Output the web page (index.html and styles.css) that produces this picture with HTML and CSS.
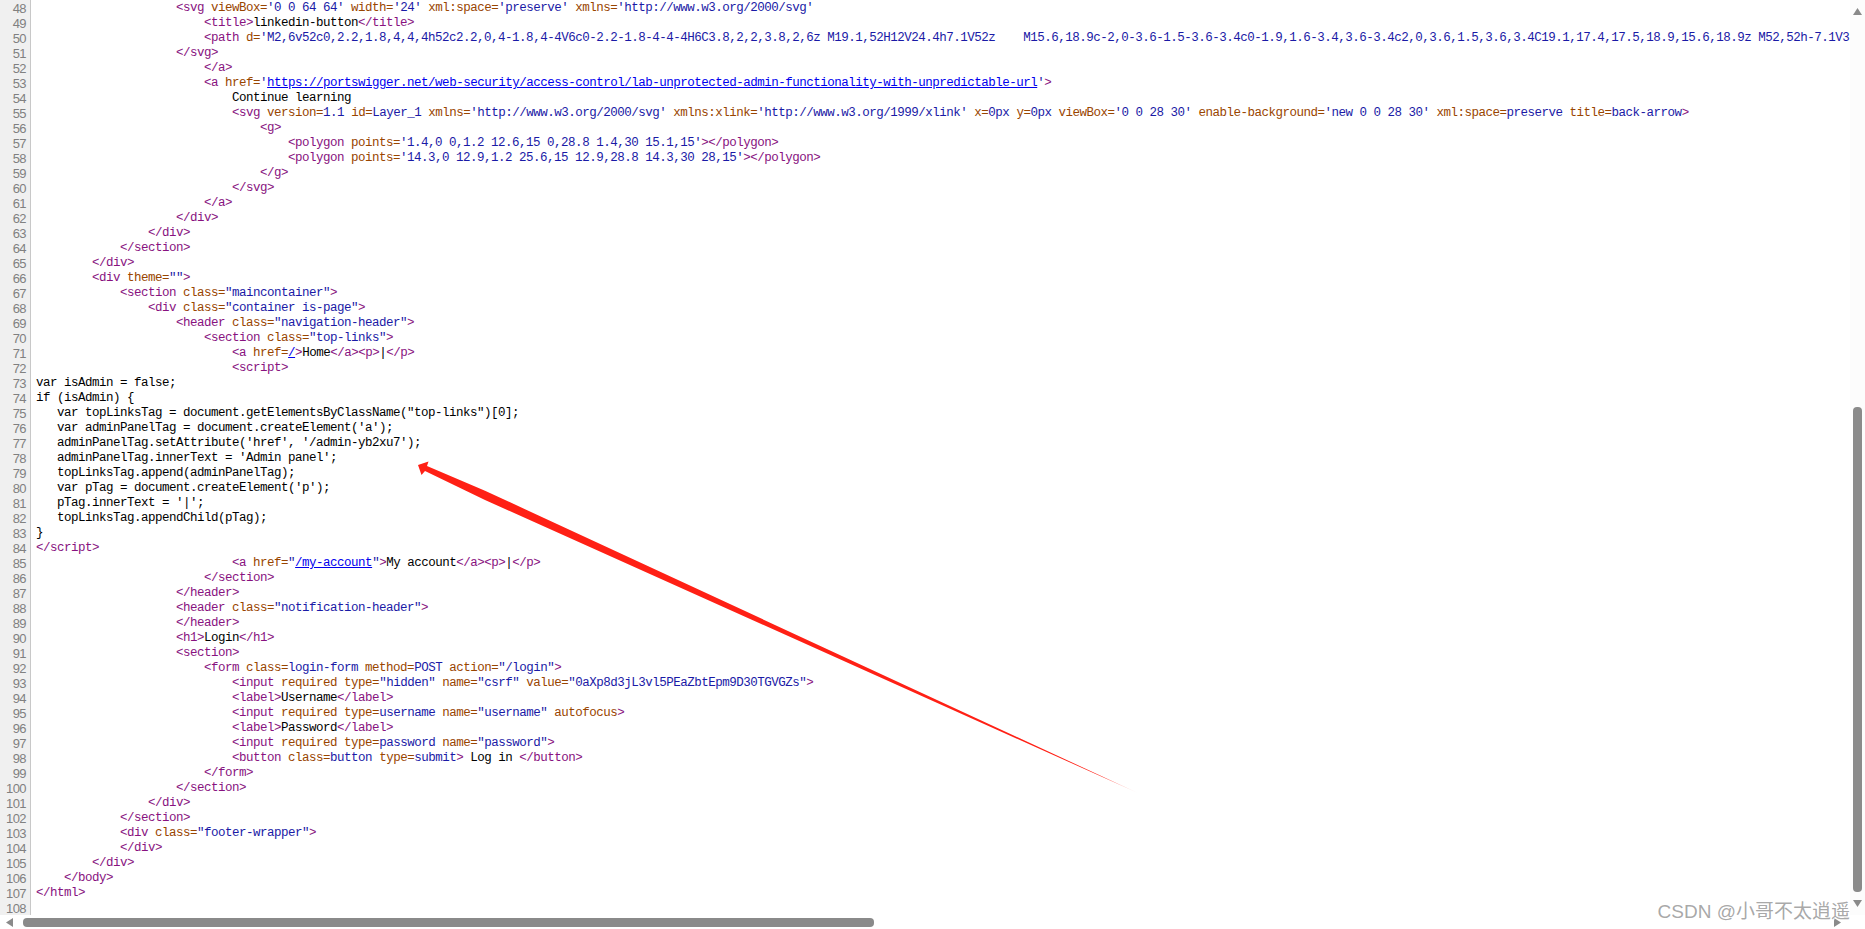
FILE: index.html
```html
<!DOCTYPE html>
<html lang="en">
<head>
<meta charset="utf-8">
<title>view-source</title>
<link rel="stylesheet" href="styles.css">
</head>
<body>
<div class="viewer">
<div class="main">
<div class="source">
<div class="row"><span class="num">48</span><span class="code">                    <i>&lt;svg</i> <b>viewBox=</b><u>'0 0 64 64'</u> <b>width=</b><u>'24'</u> <b>xml:space=</b><u>'preserve'</u> <b>xmlns=</b><u>'http://www.w3.org/2000/svg'</u></span></div>
<div class="row"><span class="num">49</span><span class="code">                        <i>&lt;title&gt;</i>linkedin-button<i>&lt;/title&gt;</i></span></div>
<div class="row"><span class="num">50</span><span class="code">                        <i>&lt;path</i> <b>d=</b><u>'M2,6v52c0,2.2,1.8,4,4,4h52c2.2,0,4-1.8,4-4V6c0-2.2-1.8-4-4-4H6C3.8,2,2,3.8,2,6z M19.1,52H12V24.4h7.1V52z    M15.6,18.9c-2,0-3.6-1.5-3.6-3.4c0-1.9,1.6-3.4,3.6-3.4c2,0,3.6,1.5,3.6,3.4C19.1,17.4,17.5,18.9,15.6,18.9z M52,52h-7.1V3</u></span></div>
<div class="row"><span class="num">51</span><span class="code">                    <i>&lt;/svg&gt;</i></span></div>
<div class="row"><span class="num">52</span><span class="code">                        <i>&lt;/a&gt;</i></span></div>
<div class="row"><span class="num">53</span><span class="code">                        <i>&lt;a</i> <b>href=</b><u>'<a href="#">https://portswigger.net/web-security/access-control/lab-unprotected-admin-functionality-with-unpredictable-url</a>'</u><i>&gt;</i></span></div>
<div class="row"><span class="num">54</span><span class="code">                            Continue learning</span></div>
<div class="row"><span class="num">55</span><span class="code">                            <i>&lt;svg</i> <b>version=</b><u>1.1</u> <b>id=</b><u>Layer_1</u> <b>xmlns=</b><u>'http://www.w3.org/2000/svg'</u> <b>xmlns:xlink=</b><u>'http://www.w3.org/1999/xlink'</u> <b>x=</b><u>0px</u> <b>y=</b><u>0px</u> <b>viewBox=</b><u>'0 0 28 30'</u> <b>enable-background=</b><u>'new 0 0 28 30'</u> <b>xml:space=</b><u>preserve</u> <b>title=</b><u>back-arrow</u><i>&gt;</i></span></div>
<div class="row"><span class="num">56</span><span class="code">                                <i>&lt;g&gt;</i></span></div>
<div class="row"><span class="num">57</span><span class="code">                                    <i>&lt;polygon</i> <b>points=</b><u>'1.4,0 0,1.2 12.6,15 0,28.8 1.4,30 15.1,15'</u><i>&gt;&lt;/polygon&gt;</i></span></div>
<div class="row"><span class="num">58</span><span class="code">                                    <i>&lt;polygon</i> <b>points=</b><u>'14.3,0 12.9,1.2 25.6,15 12.9,28.8 14.3,30 28,15'</u><i>&gt;&lt;/polygon&gt;</i></span></div>
<div class="row"><span class="num">59</span><span class="code">                                <i>&lt;/g&gt;</i></span></div>
<div class="row"><span class="num">60</span><span class="code">                            <i>&lt;/svg&gt;</i></span></div>
<div class="row"><span class="num">61</span><span class="code">                        <i>&lt;/a&gt;</i></span></div>
<div class="row"><span class="num">62</span><span class="code">                    <i>&lt;/div&gt;</i></span></div>
<div class="row"><span class="num">63</span><span class="code">                <i>&lt;/div&gt;</i></span></div>
<div class="row"><span class="num">64</span><span class="code">            <i>&lt;/section&gt;</i></span></div>
<div class="row"><span class="num">65</span><span class="code">        <i>&lt;/div&gt;</i></span></div>
<div class="row"><span class="num">66</span><span class="code">        <i>&lt;div</i> <b>theme=</b><u>""</u><i>&gt;</i></span></div>
<div class="row"><span class="num">67</span><span class="code">            <i>&lt;section</i> <b>class=</b><u>"maincontainer"</u><i>&gt;</i></span></div>
<div class="row"><span class="num">68</span><span class="code">                <i>&lt;div</i> <b>class=</b><u>"container is-page"</u><i>&gt;</i></span></div>
<div class="row"><span class="num">69</span><span class="code">                    <i>&lt;header</i> <b>class=</b><u>"navigation-header"</u><i>&gt;</i></span></div>
<div class="row"><span class="num">70</span><span class="code">                        <i>&lt;section</i> <b>class=</b><u>"top-links"</u><i>&gt;</i></span></div>
<div class="row"><span class="num">71</span><span class="code">                            <i>&lt;a</i> <b>href=</b><u><a href="#">/</a></u><i>&gt;</i>Home<i>&lt;/a&gt;&lt;p&gt;</i>|<i>&lt;/p&gt;</i></span></div>
<div class="row"><span class="num">72</span><span class="code">                            <i>&lt;script&gt;</i></span></div>
<div class="row"><span class="num">73</span><span class="code">var isAdmin = false;</span></div>
<div class="row"><span class="num">74</span><span class="code">if (isAdmin) {</span></div>
<div class="row"><span class="num">75</span><span class="code">   var topLinksTag = document.getElementsByClassName("top-links")[0];</span></div>
<div class="row"><span class="num">76</span><span class="code">   var adminPanelTag = document.createElement('a');</span></div>
<div class="row"><span class="num">77</span><span class="code">   adminPanelTag.setAttribute('href', '/admin-yb2xu7');</span></div>
<div class="row"><span class="num">78</span><span class="code">   adminPanelTag.innerText = 'Admin panel';</span></div>
<div class="row"><span class="num">79</span><span class="code">   topLinksTag.append(adminPanelTag);</span></div>
<div class="row"><span class="num">80</span><span class="code">   var pTag = document.createElement('p');</span></div>
<div class="row"><span class="num">81</span><span class="code">   pTag.innerText = '|';</span></div>
<div class="row"><span class="num">82</span><span class="code">   topLinksTag.appendChild(pTag);</span></div>
<div class="row"><span class="num">83</span><span class="code">}</span></div>
<div class="row"><span class="num">84</span><span class="code"><i>&lt;/script&gt;</i></span></div>
<div class="row"><span class="num">85</span><span class="code">                            <i>&lt;a</i> <b>href=</b><u>"<a href="#">/my-account</a>"</u><i>&gt;</i>My account<i>&lt;/a&gt;&lt;p&gt;</i>|<i>&lt;/p&gt;</i></span></div>
<div class="row"><span class="num">86</span><span class="code">                        <i>&lt;/section&gt;</i></span></div>
<div class="row"><span class="num">87</span><span class="code">                    <i>&lt;/header&gt;</i></span></div>
<div class="row"><span class="num">88</span><span class="code">                    <i>&lt;header</i> <b>class=</b><u>"notification-header"</u><i>&gt;</i></span></div>
<div class="row"><span class="num">89</span><span class="code">                    <i>&lt;/header&gt;</i></span></div>
<div class="row"><span class="num">90</span><span class="code">                    <i>&lt;h1&gt;</i>Login<i>&lt;/h1&gt;</i></span></div>
<div class="row"><span class="num">91</span><span class="code">                    <i>&lt;section&gt;</i></span></div>
<div class="row"><span class="num">92</span><span class="code">                        <i>&lt;form</i> <b>class=</b><u>login-form</u> <b>method=</b><u>POST</u> <b>action=</b><u>"/login"</u><i>&gt;</i></span></div>
<div class="row"><span class="num">93</span><span class="code">                            <i>&lt;input</i> <b>required</b> <b>type=</b><u>"hidden"</u> <b>name=</b><u>"csrf"</u> <b>value=</b><u>"0aXp8d3jL3vl5PEaZbtEpm9D30TGVGZs"</u><i>&gt;</i></span></div>
<div class="row"><span class="num">94</span><span class="code">                            <i>&lt;label&gt;</i>Username<i>&lt;/label&gt;</i></span></div>
<div class="row"><span class="num">95</span><span class="code">                            <i>&lt;input</i> <b>required</b> <b>type=</b><u>username</u> <b>name=</b><u>"username"</u> <b>autofocus</b><i>&gt;</i></span></div>
<div class="row"><span class="num">96</span><span class="code">                            <i>&lt;label&gt;</i>Password<i>&lt;/label&gt;</i></span></div>
<div class="row"><span class="num">97</span><span class="code">                            <i>&lt;input</i> <b>required</b> <b>type=</b><u>password</u> <b>name=</b><u>"password"</u><i>&gt;</i></span></div>
<div class="row"><span class="num">98</span><span class="code">                            <i>&lt;button</i> <b>class=</b><u>button</u> <b>type=</b><u>submit</u><i>&gt;</i> Log in <i>&lt;/button&gt;</i></span></div>
<div class="row"><span class="num">99</span><span class="code">                        <i>&lt;/form&gt;</i></span></div>
<div class="row"><span class="num">100</span><span class="code">                    <i>&lt;/section&gt;</i></span></div>
<div class="row"><span class="num">101</span><span class="code">                <i>&lt;/div&gt;</i></span></div>
<div class="row"><span class="num">102</span><span class="code">            <i>&lt;/section&gt;</i></span></div>
<div class="row"><span class="num">103</span><span class="code">            <i>&lt;div</i> <b>class=</b><u>"footer-wrapper"</u><i>&gt;</i></span></div>
<div class="row"><span class="num">104</span><span class="code">            <i>&lt;/div&gt;</i></span></div>
<div class="row"><span class="num">105</span><span class="code">        <i>&lt;/div&gt;</i></span></div>
<div class="row"><span class="num">106</span><span class="code">    <i>&lt;/body&gt;</i></span></div>
<div class="row"><span class="num">107</span><span class="code"><i>&lt;/html&gt;</i></span></div>
<div class="row"><span class="num">108</span><span class="code"></span></div>
</div>
<div class="vbar">
<svg class="varrow" viewBox="0 0 9 7"><polygon points="4.5,0 9,7 0,7"/></svg>
<div class="vthumb"></div>
<svg class="varrow down" viewBox="0 0 9 7"><polygon points="0,0 9,0 4.5,7"/></svg>
</div>
</div>
<div class="hbar">
<svg class="harrow" viewBox="0 0 7 9"><polygon points="0,4.5 7,0 7,9"/></svg>
<div class="hthumb"></div>
<svg class="harrow right" viewBox="0 0 7 9"><polygon points="7,4.5 0,0 0,9"/></svg>
</div>
<svg class="annot" viewBox="0 0 1865 929">
<defs><linearGradient id="fade" gradientUnits="userSpaceOnUse" x1="418" y1="465" x2="1138" y2="793"><stop offset="0" stop-color="#ff2015"/><stop offset=".95" stop-color="#ff2015"/><stop offset="1" stop-color="#ff2015" stop-opacity=".15"/></linearGradient></defs>
<polygon fill="url(#fade)" points="418,465 428.5,461.5 427,466 485,490.7 1138,793 485,500 425,471 421.5,475"/>
</svg>
<div class="mark">CSDN @小哥不太逍遥</div>
</div>
</body>
</html>
```
FILE: styles.css
```css
* { box-sizing: border-box; }
html, body { margin: 0; height: 100%; background: #fff; overflow: hidden; }
.viewer { position: relative; display: flex; flex-direction: column; height: 929px; overflow: hidden; }
.main { display: flex; height: 915px; }
.source { flex: 1; min-width: 0; overflow: hidden; }
.row { display: flex; height: 15px; white-space: pre; }
.num { flex: none; width: 31px; padding-right: 4px; text-align: right; background: #f0f0f0; border-right: 1px solid #c8c8c8; color: #808080; font: 13px/17px "Liberation Sans", sans-serif; letter-spacing: -.6px; }
.code { padding-left: 5px; font: 12.5px/17px "Liberation Mono", monospace; letter-spacing: -.5px; color: #000; }
.code i { font-style: normal; color: #881280; }
.code b { font-weight: normal; color: #994500; }
.code u { text-decoration: none; color: #1a1aa6; }
.code a { color: #0000ee; text-decoration: underline; }
.vbar { flex: none; width: 15px; background: #fcfcfc; display: flex; flex-direction: column; align-items: flex-start; padding: 8px 3px 0 3px; }
.varrow { width: 9px; height: 7px; fill: #8a8a8a; display: block; }
.vthumb { width: 9px; height: 485px; margin-top: 392px; border-radius: 4px; background: #8a8a8a; }
.varrow.down { margin-top: 8px; }
.hbar { flex: none; height: 14px; display: flex; align-items: center; padding: 0 24px 0 6px; }
.harrow { width: 7px; height: 9px; fill: #8a8a8a; display: block; }
.hthumb { width: 851px; height: 9px; margin-left: 10px; border-radius: 4px; background: #8a8a8a; }
.harrow.right { margin-left: auto; }
.annot { position: absolute; left: 0; top: 0; width: 1865px; height: 929px; pointer-events: none; }
.mark { position: absolute; right: 15px; bottom: 5px; font: 19px/24px "Liberation Sans", "Noto Sans CJK SC", sans-serif; color: rgba(130,130,130,.7); text-shadow: 1px 1px 1px rgba(255,255,255,.8); white-space: nowrap; }
```
